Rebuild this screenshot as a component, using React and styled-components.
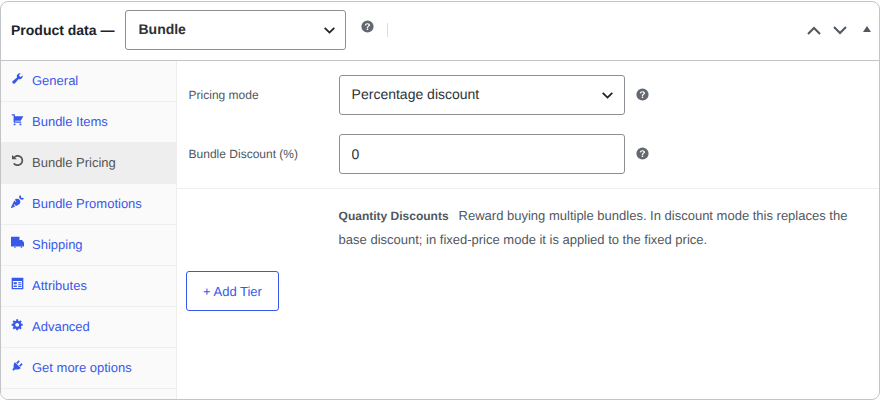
import React from "react";
import styled, { createGlobalStyle } from "styled-components";
import { FaCarrot } from "react-icons/fa";

const Global = createGlobalStyle`
  html, body { margin: 0; padding: 0; background: #fff; }
  body { font-family: "Liberation Sans", Arial, sans-serif; padding-top: 1px; text-rendering: geometricPrecision; }
  * { box-sizing: border-box; }
`;

const Panel = styled.div`
  width: 880px; height: 399px; background: #fff;
  border: 1px solid #c3c4c7; border-radius: 8px;
  display: flex; flex-direction: column; overflow: hidden;
`;
const Header = styled.div`
  height: 59px; flex: none; border-bottom: 1px solid #c3c4c7;
  display: flex; align-items: center; padding: 0 0 2px 10px;
`;
const Title = styled.span`
  font-size: 14px; font-weight: 700; color: #1d2327; white-space: nowrap; margin-right: 11px; margin-top: -1px;
`;
const SelectWrap = styled.div`
  position: relative; flex: none; width: ${p => p.$w}px; height: 40px;
`;
const Select = styled.select`
  appearance: none; width: 100%; height: 100%; margin: 0;
  border: 1px solid #8c8f94; border-radius: 3px; background: #fff;
  padding: 0 24px 3px 12px; font-family: "Liberation Sans", Arial, sans-serif;
  font-size: 14px; color: #2c3338; font-weight: ${p => (p.$bold ? 700 : 400)};
  text-rendering: geometricPrecision;
`;
const Chevron = styled.svg`
  position: absolute; right: 11.5px; top: 17px;
  width: 11px; height: 7px; fill: none; stroke: #1d2327; stroke-width: 1.8; pointer-events: none;
`;
const HelpIcon = styled.svg`
  width: 13px; height: 13px; fill: #646970; flex: none; display: block;
`;
const HeaderHelp = styled.span`
  margin-left: 15px; margin-top: -7px; display: flex;
`;
const Divider = styled.span`
  width: 1px; height: 14px; background: #dcdcde; margin-left: 13px;
`;
const HeaderActions = styled.div`
  margin-left: auto; display: flex; align-items: center; gap: 12px; padding-right: 8px;
`;
const ActionArrow = styled.svg`
  width: 14px; height: 9px; fill: none; stroke: #50575e; stroke-width: 2; display: block;
`;
const Toggle = styled.span`
  width: 0; height: 0; border-left: 4.5px solid transparent; border-right: 4.5px solid transparent;
  border-bottom: 6px solid #50575e; margin-left: 4px; margin-top: -2px;
`;
const Body = styled.div`
  flex: 1; display: flex; min-height: 0;
`;
const Side = styled.ul`
  list-style: none; margin: 0; padding: 0; width: 20%; flex: none;
  background: #fafafa; border-right: 1px solid #eee;
`;
const Item = styled.li`
  height: 41px; display: flex; align-items: flex-start;
  padding: 11px 0 0 9px; gap: 8px; font-size: 13px; line-height: 17px;
  border-bottom: 1px solid #eee;
  margin-right: ${p => (p.$active ? "-1px" : "0")};
  color: ${p => (p.$active ? "#555" : "#3858e9")};
  background: ${p => (p.$active ? "#eee" : "transparent")};
`;
const ItemIcon = styled.span`
  width: 14px; height: 14px; flex: none; display: flex; align-items: center; justify-content: center;
  svg { width: 13px; height: 13px; fill: currentColor; display: block; margin-top: -1px; }
`;
const Main = styled.div`
  flex: 1; display: flex; flex-direction: column; min-width: 0;
`;
const Fields = styled.div`
  padding: 14px 0 14px 12px; display: flex; flex-direction: column; gap: 19px;
  border-bottom: 1px solid #eee;
`;
const Field = styled.div`
  display: flex; align-items: center;
`;
const Label = styled.label`
  width: 150px; flex: none; font-size: 12px; color: #50575e;
`;
const TextInput = styled.input`
  width: 286px; height: 40px; flex: none; margin: 0; border: 1px solid #8c8f94; border-radius: 3px;
  padding: 0 12px; font-family: "Liberation Sans", Arial, sans-serif; font-size: 14px; color: #2c3338;
  background: #fff; text-rendering: geometricPrecision;
`;
const FieldHelp = styled.span`
  margin-left: 11px; margin-top: -2px; display: flex;
`;
const Description = styled.p`
  margin: 15px 24px 0 162px; font-size: 13px; line-height: 24px; color: #50575e;
`;
const DescTitle = styled.strong`
  font-size: 12px; margin-right: 10px;
`;
const AddTier = styled.button`
  align-self: flex-start; margin: 19px 0 0 9.4px; width: 93px; height: 40px;
  border: 1px solid #3858e9; border-radius: 3px; background: #fff; color: #3858e9;
  font: 13px "Liberation Sans", Arial, sans-serif; padding: 0; text-rendering: geometricPrecision;
`;

const helpPath = "M10 2a8 8 0 1 0 0 16 8 8 0 0 0 0-16zm.9 12.6H9v-1.8h1.9v1.8zm2-5.6c-.3.4-.8.9-1.4 1.4-.4.3-.6.6-.6.9-.1.2-.1.5-.1.9H9.1v-.5c0-.4.1-.8.2-1 .2-.3.5-.6.9-1 .5-.4.7-.6.8-.7.2-.2.2-.4.2-.7 0-.3-.1-.6-.4-.8-.2-.2-.6-.4-1-.4s-.8.1-1 .4c-.3.2-.5.6-.6 1.1l-1.7-.2c0-.8.4-1.5 1-2 .6-.6 1.4-.8 2.4-.8s1.9.3 2.5.8c.6.6.9 1.2.9 1.9 0 .4-.1.8-.3 1.1z";

const Help = () => (
  <HelpIcon viewBox="1.5 1.5 17 17" aria-hidden="true"><path d={helpPath} /></HelpIcon>
);

const Wrench = () => (
  <svg viewBox="0 0 20 20"><path d="M16.68 9.77c-1.34 1.34-3.3 1.67-4.95.99l-5.41 6.52c-.99.99-2.59.99-3.58 0s-.99-2.59 0-3.58l6.52-5.42c-.68-1.65-.35-3.61.99-4.95 1.28-1.28 3.12-1.62 4.72-1.06l-2.89 2.89 2.82 2.82 2.86-2.87c.53 1.58.18 3.39-1.08 4.66z" /></svg>
);
const Cart = () => (
  <svg viewBox="0 0 20 20"><path d="M6 13h9c.55 0 1 .45 1 1s-.45 1-1 1H5c-.55 0-1-.45-1-1V4H2c-.55 0-1-.45-1-1s.45-1 1-1h3c.55 0 1 .45 1 1v2h13l-4 7H6v1zm-.5 3c.83 0 1.5.67 1.5 1.5S6.33 19 5.5 19 4 18.33 4 17.5 4.67 16 5.5 16zm9 0c.83 0 1.5.67 1.5 1.5s-.67 1.5-1.5 1.5-1.5-.67-1.5-1.5.67-1.5 1.5-1.5z" /></svg>
);
const Rotate = () => (
  <svg viewBox="0 0 20 20"><path d="M10.25 1.5c4.8 0 8.5 3.8 8.5 8.5s-3.7 8.5-8.5 8.5c-2.9 0-5.5-1.4-7-3.6l2.2-1.5c1.1 1.5 2.8 2.5 4.8 2.5 3.3 0 5.9-2.6 5.9-5.9s-2.6-5.9-5.9-5.9c-1.5 0-2.8.5-3.9 1.4l2.7 2.7H1.5V1.6l2.9 2.4c1.5-1.6 3.6-2.5 5.85-2.5z" /></svg>
);
const Truck = () => (
  <svg viewBox="0 0 20 20"><path d="M0 1h13v5h4l3 4v6h-2.2a2 2 0 0 0-3.6 0H7.800a2 2 0 0 0-3.600 0H0V1zM6 15.500a1.300 1.300 0 1 1 0 2.600 1.300 1.300 0 0 1 0-2.600zm10 0a1.300 1.300 0 1 1 0 2.600 1.300 1.300 0 0 1 0-2.600z" /></svg>
);
const Table = () => (
  <svg viewBox="0 0 20 20"><path fillRule="evenodd" d="M1 1h18v18H1V1zm2 5v11h14V6H3zm1 2h5v3H4V8zm0 5h5v2.500H4V13zm7-5h5v1.500h-5V8zm0 3h5v1.500h-5V11zm0 3h5v1.500h-5V14z" /></svg>
);
const Gear = () => (
  <svg viewBox="0 0 20 20"><path d="M18 12h-2.18c-.17.7-.44 1.35-.81 1.93l1.54 1.54-2.1 2.1-1.54-1.54c-.58.36-1.23.63-1.91.79V19H8v-2.18c-.68-.16-1.33-.43-1.91-.79l-1.54 1.54-2.12-2.12 1.54-1.54c-.36-.58-.63-1.23-.79-1.91H1V9.03h2.17c.16-.7.44-1.35.8-1.94L2.43 5.55l2.1-2.1 1.54 1.54c.58-.37 1.24-.64 1.93-.81V2h3v2.18c.68.16 1.33.43 1.91.79l1.54-1.54 2.12 2.12-1.54 1.54c.36.59.64 1.24.8 1.94H18V12zm-8.5 1.5c1.66 0 3-1.34 3-3s-1.34-3-3-3-3 1.34-3 3 1.34 3 3 3z" /></svg>
);
const Plug = () => (
  <svg viewBox="0 0 20 20"><path d="M13.11 4.36L9.87 7.6 8 5.73l3.24-3.24c.35-.34 1.05-.2 1.56.32.52.51.66 1.21.31 1.55zm-8 1.77l.91-1.12 9.01 9.01-1.19.84c-.71.71-2.63 1.16-3.82 1.16H6.14L4.9 17.26c-.59.59-1.54.59-2.12 0-.59-.58-.59-1.53 0-2.12l1.24-1.24v-3.88c0-1.13.4-3.19 1.09-3.89zm7.26 3.97l3.24-3.24c.34-.35 1.04-.21 1.55.31.52.51.66 1.21.31 1.55l-3.24 3.25z" /></svg>
);

const items = [
  ["General", <Wrench />],
  ["Bundle Items", <Cart />],
  ["Bundle Pricing", <Rotate />, true],
  ["Bundle Promotions", <FaCarrot />],
  ["Shipping", <Truck />],
  ["Attributes", <Table />],
  ["Advanced", <Gear />],
  ["Get more options", <Plug />],
];

const SelectChevron = () => (
  <Chevron viewBox="0 0 11 7"><path d="M.7.8l4.8 4.8L10.3.8" /></Chevron>
);

export default function App() {
  return (
    <>
      <Global />
      <Panel>
        <Header>
          <Title>Product data —</Title>
          <SelectWrap $w={221}>
            <Select $bold defaultValue="Bundle"><option>Bundle</option></Select>
            <SelectChevron />
          </SelectWrap>
          <HeaderHelp><Help /></HeaderHelp>
          <Divider />
          <HeaderActions>
            <ActionArrow viewBox="0 0 14 9"><path d="M1 8l6-6 6 6" /></ActionArrow>
            <ActionArrow viewBox="0 0 14 9"><path d="M1 1l6 6 6-6" /></ActionArrow>
            <Toggle />
          </HeaderActions>
        </Header>
        <Body>
          <Side>
            {items.map(([name, icon, active]) => (
              <Item key={name} $active={active}>
                <ItemIcon>{icon}</ItemIcon>
                {name}
              </Item>
            ))}
          </Side>
          <Main>
            <Fields>
              <Field>
                <Label>Pricing mode</Label>
                <SelectWrap $w={286}>
                  <Select defaultValue="Percentage discount"><option>Percentage discount</option></Select>
                  <SelectChevron />
                </SelectWrap>
                <FieldHelp><Help /></FieldHelp>
              </Field>
              <Field>
                <Label>Bundle Discount (%)</Label>
                <TextInput defaultValue="0" />
                <FieldHelp><Help /></FieldHelp>
              </Field>
            </Fields>
            <Description>
              <DescTitle>Quantity Discounts</DescTitle>
              Reward buying multiple bundles. In discount mode this replaces the base discount; in fixed-price mode it is applied to the fixed price.
            </Description>
            <AddTier>+ Add Tier</AddTier>
          </Main>
        </Body>
      </Panel>
    </>
  );
}
